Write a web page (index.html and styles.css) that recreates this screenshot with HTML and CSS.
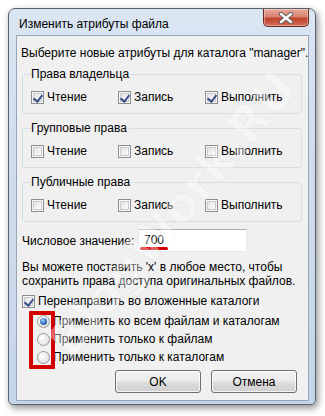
FILE: index.html
```html
<!DOCTYPE html>
<html lang="ru">
<head>
    <meta charset="UTF-8">
    <title>Изменить атрибуты файла</title>
    <link rel="stylesheet" href="styles.css">
</head>
<body>
    <div class="window">
        <div class="titlebar">
            <div class="title">Изменить атрибуты файла</div>
            <div class="close-btn">
                <svg width="16" height="12" viewBox="0 0 16 12">
                    <path d="M3 2 L13 10 M13 2 L3 10" stroke="#5a5a5a" stroke-width="4.2" stroke-linecap="round"/>
                    <path d="M3 2 L13 10 M13 2 L3 10" stroke="#ffffff" stroke-width="2.4" stroke-linecap="round"/>
                </svg>
            </div>
        </div>

        <div class="client">
            <div class="intro">Выберите новые атрибуты для каталога "manager".</div>

            <fieldset class="group">
                <legend>Права владельца</legend>
                <div class="check-row">
                    <label class="check"><span class="box checked"></span>Чтение</label>
                    <label class="check"><span class="box checked"></span>Запись</label>
                    <label class="check"><span class="box checked"></span>Выполнить</label>
                </div>
            </fieldset>

            <fieldset class="group">
                <legend>Групповые права</legend>
                <div class="check-row">
                    <label class="check"><span class="box"></span>Чтение</label>
                    <label class="check"><span class="box"></span>Запись</label>
                    <label class="check"><span class="box"></span>Выполнить</label>
                </div>
            </fieldset>

            <fieldset class="group">
                <legend>Публичные права</legend>
                <div class="check-row">
                    <label class="check"><span class="box"></span>Чтение</label>
                    <label class="check"><span class="box"></span>Запись</label>
                    <label class="check"><span class="box"></span>Выполнить</label>
                </div>
            </fieldset>

            <div class="numeric">
                <span class="numeric-label">Числовое значение:</span>
                <div class="numeric-input">
                    <span class="numeric-value">700</span>
                    <span class="mark-underline"></span>
                </div>
            </div>

            <div class="hint">Вы можете поставить 'x' в любое место, чтобы<br>сохранить права доступа оригинальных файлов.</div>

            <label class="check recurse"><span class="box checked"></span>Перенаправить во вложенные каталоги</label>

            <div class="radio-group">
                <label class="radio"><span class="dot selected"></span>Применить ко всем файлам и каталогам</label>
                <label class="radio"><span class="dot"></span>Применить только к файлам</label>
                <label class="radio"><span class="dot"></span>Применить только к каталогам</label>
                <span class="mark-box"></span>
            </div>

            <div class="buttons">
                <button class="btn">OK</button>
                <button class="btn">Отмена</button>
            </div>

            <div class="watermark">BlogWork.RU</div>
        </div>
    </div>
</body>
</html>
```

FILE: styles.css
```css
* {
    margin: 0;
    padding: 0;
    box-sizing: border-box;
}

body {
    font-family: "Liberation Sans", Arial, sans-serif;
    font-size: 12px;
    color: #000000;
    background: #ffffff;
    padding: 8px 9px 11px 8px;
    white-space: nowrap;
}

.window {
    width: 308px;
    height: 397px;
    border: 1px solid #59616b;
    border-radius: 7px 7px 5px 5px;
    background: linear-gradient(180deg, #dbe6f3 0%, #cfdced 40%, #c5d5e9 100%);
    box-shadow: 2px 3px 7px rgba(0, 0, 0, 0.45);
    padding: 0 6px 3px 7px;
    display: flex;
    flex-direction: column;
}

.titlebar {
    height: 25px;
    display: flex;
    justify-content: space-between;
    align-items: flex-start;
}

.title {
    padding: 7px 0 0 3px;
    line-height: 16px;
    color: #000000;
}

.close-btn {
    width: 46px;
    height: 18px;
    border: 1px solid #6d2b22;
    border-top: none;
    border-radius: 0 0 5px 5px;
    background: linear-gradient(180deg, #e9a99a 0%, #d88471 45%, #c0432c 55%, #d0705a 100%);
    box-shadow: inset 0 0 0 1px rgba(255, 255, 255, 0.35);
    display: flex;
    align-items: center;
    justify-content: center;
}

.client {
    position: relative;
    flex: 1;
    margin-top: 1px;
    background: #f0f0f0;
    border: 1px solid #97a6b8;
    padding: 9px 6px 0 4px;
    overflow: hidden;
}

.intro {
    line-height: 16px;
}

.group {
    margin: 6px 0 0 1px;
    border: 1px solid #d5dfe5;
    border-radius: 3px;
    padding: 0 8px 8px 8px;
}

.group + .group {
    margin-top: 7px;
}

.group legend {
    padding: 0 2px 0 0;
    line-height: 15px;
}

.check-row {
    display: grid;
    grid-template-columns: 87px 87px auto;
    margin-top: 8px;
}

.check {
    display: flex;
    align-items: center;
    height: 15px;
    line-height: 15px;
}

.box {
    width: 13px;
    height: 13px;
    border: 1px solid #8e8f8f;
    background: linear-gradient(135deg, #dcdcdc 0%, #f4f4f4 60%, #ffffff 100%);
    box-shadow: inset 0 0 0 1px #f6f6f6, inset 0 0 0 2px #c9cbd0;
    margin-right: 3px;
    flex-shrink: 0;
    position: relative;
}

.box.checked::after {
    content: "";
    position: absolute;
    left: 3px;
    top: 1px;
    width: 4px;
    height: 7px;
    border: solid #3d508c;
    border-width: 0 2px 2px 0;
    transform: rotate(38deg);
}

.numeric {
    display: flex;
    align-items: center;
    margin-top: 7px;
    margin-left: 1px;
}

.numeric-label {
    width: 116px;
}

.numeric-input {
    position: relative;
    width: 109px;
    height: 23px;
    background: #ffffff;
    border: 1px solid #e3e9ef;
    border-top-color: #abadb3;
    padding: 0 5px;
    line-height: 21px;
}

.mark-underline {
    position: absolute;
    left: 1px;
    bottom: 1px;
    width: 28px;
    height: 3px;
    border-radius: 2px;
    background: #d40000;
}

.hint {
    margin-top: 8px;
    margin-left: 1px;
    line-height: 14px;
}

.recurse {
    margin-top: 5px;
    margin-left: 1px;
    height: 16px;
}

.radio-group {
    position: relative;
    margin-top: 3px;
    padding-left: 16px;
}

.radio {
    display: flex;
    align-items: center;
    height: 18px;
    line-height: 18px;
}

.dot {
    width: 13px;
    height: 13px;
    border-radius: 50%;
    border: 1px solid #9a9a9a;
    background: radial-gradient(circle at 35% 35%, #ffffff 0%, #e8e8e8 60%, #cfcfcf 100%);
    margin-right: 3px;
    flex-shrink: 0;
    position: relative;
}

.dot.selected::after {
    content: "";
    position: absolute;
    left: 2px;
    top: 2px;
    width: 7px;
    height: 7px;
    border-radius: 50%;
    background: radial-gradient(circle at 40% 35%, #a9d0f5 0%, #2f6fc0 55%, #0c3d82 100%);
}

.mark-box {
    position: absolute;
    left: 8px;
    top: -1px;
    width: 26px;
    height: 58px;
    border: 4px solid #d40000;
    border-radius: 1px;
}

.buttons {
    display: flex;
    justify-content: flex-end;
    gap: 10px;
    margin-top: 4px;
    padding-right: 5px;
}

.btn {
    width: 86px;
    height: 23px;
    font-family: "Liberation Sans", Arial, sans-serif;
    font-size: 12px;
    color: #000000;
    border: 1px solid #707070;
    border-radius: 3px;
    background: linear-gradient(180deg, #f2f2f2 0%, #ebebeb 48%, #dddddd 52%, #cfcfcf 100%);
    box-shadow: inset 0 0 0 1px rgba(255, 255, 255, 0.75);
}

.watermark {
    position: absolute;
    left: 155px;
    top: 178px;
    font-family: "DejaVu Sans", sans-serif;
    font-size: 48px;
    font-weight: bold;
    color: rgba(255, 255, 255, 0.4);
    -webkit-text-stroke: 1px rgba(0, 0, 0, 0.06);
    transform: translate(-50%, -50%) rotate(-50deg);
    pointer-events: none;
}
```
